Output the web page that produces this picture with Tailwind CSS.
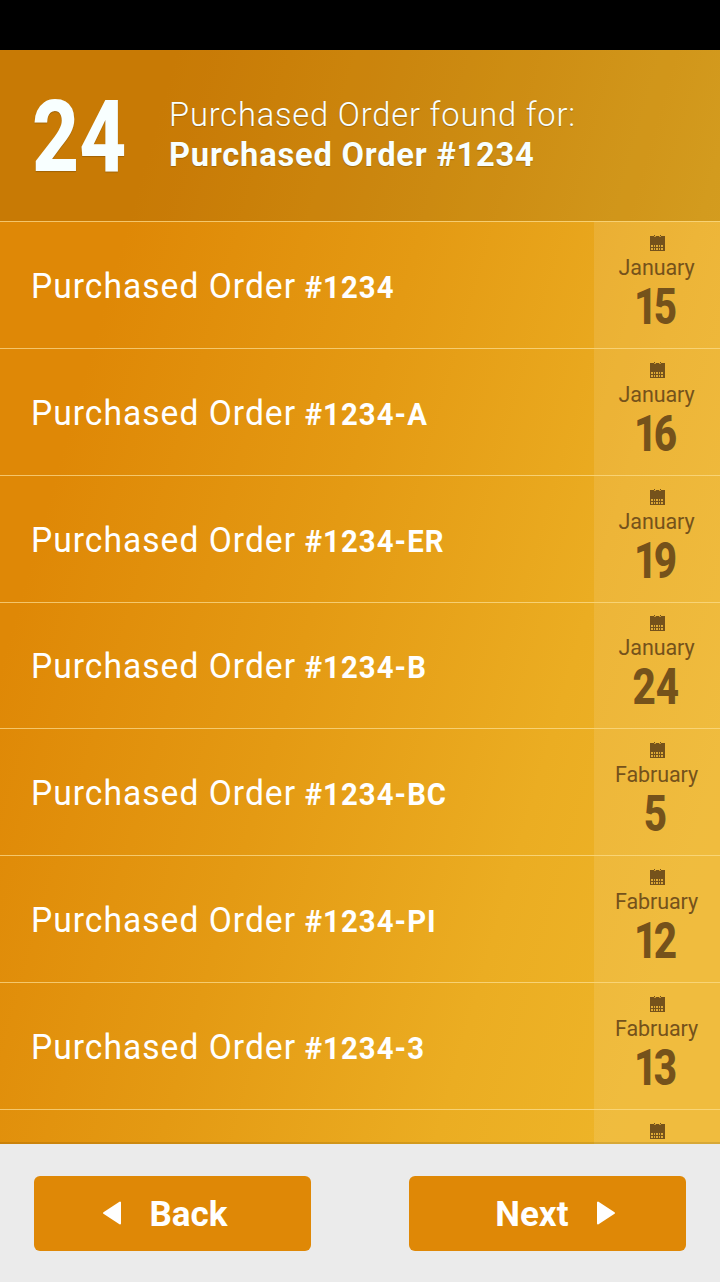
<!DOCTYPE html>
<html lang="en">
<head>
<meta charset="utf-8">
<title>Purchased Orders</title>
<script src="https://cdn.jsdelivr.net/npm/@tailwindcss/browser@4"></script>
</head>
<body class="w-[720px] h-[1282px] overflow-hidden bg-[#ebebeb] font-['Roboto',sans-serif] text-white flex flex-col">
<svg class="hidden">
  <symbol id="cal" viewBox="0 0 15 16">
    <path d="M0 1h15v15H0z" fill="#75521b"/>
    <path d="M4 0h1v1H4zM10 0h1v1h-1z" fill="#75521b"/>
    <path d="M4 1h1v1H4zM5 1h1v1H5zM10 1h1v1h-1zM9 1h1v1H9z" fill="#c8952c"/>
    <path d="M1 10h2v2H1zM4 10h1v2H4zM6 10h2v2H6zM9 10h1v2H9zM11 10h2v2h-2zM1 13h2v2H1zM4 13h1v2H4zM6 13h2v2H6zM9 13h1v2H9zM11 13h2v2h-2z" fill="#dfaa36"/>
  </symbol>
</svg>
<div class="h-[50px] shrink-0 bg-black"></div>
<main class="h-[1094px] shrink-0 flex flex-col overflow-hidden bg-[linear-gradient(106deg,#df8806_170px,#e49a13_455px,#ebad22_720px,#eeb529_910px)]">
  <header class="h-[171px] shrink-0 bg-black/10 flex text-[#f8ffff] [text-shadow:0_1px_1px_rgba(0,0,0,0.2)]">
    <div class="w-[169px] pl-[32px] pt-[28px]"><div class="origin-left scale-x-[0.81] text-[101px] leading-[118px] font-extrabold">24</div></div>
    <div class="pt-[44px] whitespace-nowrap">
      <p class="text-[34px] leading-[40px] font-light origin-left scale-x-[0.96] tracking-[0.87px]">Purchased Order found for:</p>
      <p class="text-[34px] leading-[40px] font-bold origin-left scale-x-[0.96] tracking-[0.82px]">Purchased Order #1234</p>
    </div>
  </header>
  <ul id="rows" class="flex flex-col"></ul>
  <div class="h-[2px] shrink-0 mt-[-2px] bg-black/10 relative"></div>
</main>
<footer class="flex-1 px-[34px] pt-[32px] flex justify-between items-start">
  <button class="w-[277px] h-[75px] rounded-[6px] bg-[#df8806] flex items-center pl-[68px]">
    <svg class="w-[19px] h-[26px]" viewBox="0 0 19 26"><path d="M18 1.500v21L2 12z" fill="#fff" stroke="#fff" stroke-width="2" stroke-linejoin="round"/></svg>
    <span class="ml-[28.5px] mt-[2px] text-[35px] leading-[41px] font-bold">Back</span>
  </button>
  <button class="w-[277px] h-[75px] rounded-[6px] bg-[#df8806] flex items-center justify-end pr-[70px]">
    <span class="mr-[28.5px] mt-[2px] text-[35px] leading-[41px] font-bold">Next</span>
    <svg class="w-[19px] h-[26px]" viewBox="0 0 19 26"><path d="M1 1.500v21L17 12z" fill="#fff" stroke="#fff" stroke-width="2" stroke-linejoin="round"/></svg>
  </button>
</footer>
<script>
const rows = [
  ['#1234','January','15'],['#1234-A','January','16'],['#1234-ER','January','19'],['#1234-B','January','24'],
  ['#1234-BC','Fabruary','5'],['#1234-PI','Fabruary','12'],['#1234-3','Fabruary','13'],['','','']
];
const day = d => d[0]==='1' ? `<span class="tracking-[-4.5px]">1</span>${d[1]}` : d;
document.getElementById('rows').innerHTML = rows.map(([n,m,d],i) => `
<li class="${i===3?'h-[126px]':i===7?'h-[35px]':'h-[127px]'} shrink-0 overflow-hidden flex border-t border-[#ffe6a0]/65">
  <div class="flex-1 pl-[30.5px] ${i===3?'pt-[43px]':'pt-[44px]'} whitespace-nowrap leading-[41px]">${n?`<div class="origin-left scale-x-[0.96]"><span class="text-[35px] font-[370] tracking-[1.05px]">Purchased Order</span><b class="ml-[9px] text-[30.5px] font-bold tracking-[1.1px]">${n}</b></div>`:''}</div>
  <div class="w-[126px] bg-white/10 text-[#75521b] ${i===3?'pt-[12px]':'pt-[13px]'} flex flex-col items-center">
    <svg class="w-[15px] h-[16px] shrink-0"><use href="#cal"/></svg>
    ${m?`<div class="mt-[4px] mr-[1px] text-[21.5px] leading-[26px] tracking-[-0.1px] font-[370]">${m}</div>
    <div class="origin-center mr-[3px] mt-[-1px] scale-x-[0.81] text-[50px] leading-[54px] font-extrabold">${day(d)}</div>`:''}
  </div>
</li>`).join('');
</script>
</body>
</html>
